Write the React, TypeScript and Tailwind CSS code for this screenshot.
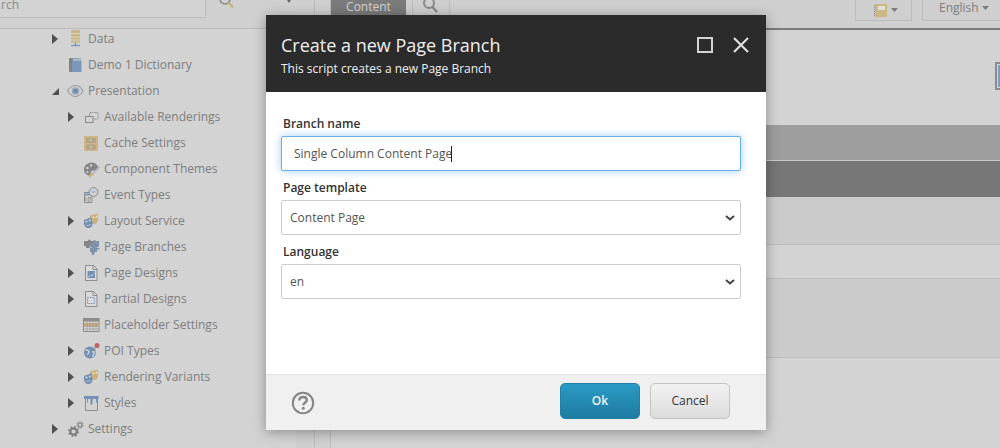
import React from 'react';

type TreeRow = {
    label: string;
    level: 1 | 2;
    arrow?: 'right' | 'down';
    icon: React.ReactNode;
};

const Svg = ({ children }: { children: React.ReactNode }) => (
    <svg width="16" height="16" viewBox="0 0 16 16" className="shrink-0 overflow-visible">
        {children}
    </svg>
);

const DataIcon = () => (
    <Svg>
        <rect x="3" y="-1" width="9" height="12.500" fill="#c9b588" />
        <path d="M3 2.500h9M3 6h9M3 9h9" stroke="#e0d6bd" strokeWidth="1" />
        <path d="M7.500 11.500v3M3 14.500h9" stroke="#7c98b8" strokeWidth="1.400" />
    </Svg>
);

const BookIcon = () => (
    <Svg>
        <rect x="1" y="1" width="4" height="14" rx="1" fill="#838383" />
        <path d="M4 3.500h9.500V15H4z" fill="#7b98ba" />
        <path d="M5 1.800h8" stroke="#7b98ba" strokeWidth="1.200" />
    </Svg>
);

const EyeIcon = () => (
    <Svg>
        <path d="M-0.500 8C2 4 5 2.500 7.500 2.500S13 4 15 8C13 11.500 10 13.500 7.500 13.500S2 11.500-0.500 8z" fill="none" stroke="#9a9fa6" strokeWidth="1.200" />
        <circle cx="7.500" cy="8" r="3.800" fill="#9aa5b3" />
        <circle cx="7.500" cy="8" r="2" fill="#6c86a6" />
    </Svg>
);

const RenderingsIcon = () => (
    <Svg>
        <rect x="1.500" y="7.500" width="7.500" height="6" fill="none" stroke="#8a8a8a" />
        <path d="M5.500 7V3.500h8.500v6.500h-4" fill="none" stroke="#9a9a9a" strokeDasharray="3 1" />
    </Svg>
);

const CacheIcon = () => (
    <Svg>
        <rect x="0" y="1" width="14" height="15" fill="#cdb686" />
        <rect x="2" y="3" width="10" height="5" fill="#b5a68a" />
        <rect x="2" y="9.500" width="10" height="5" fill="#b5a68a" />
        <path d="M6 5h2M6 12h2" stroke="#e3dbc6" />
    </Svg>
);

const PaletteIcon = () => (
    <Svg>
        <path d="M8 1.500C3.500 1.500 0 4.500 0 8.500c0 3.500 3 6 5.500 6 1.500 0 1.500-1.500 1.200-2.500S7.500 9.500 9 9.500h3c1.500 0 2.500-1 2-3C13.500 3.500 11.500 1.500 8 1.500z" fill="#858585" />
        <circle cx="3.500" cy="7" r="1.200" fill="#d3d3d3" />
        <circle cx="7" cy="4.500" r="1.200" fill="#d3d3d3" />
        <circle cx="3.500" cy="11" r="1.100" fill="#d3d3d3" />
        <path d="M15.500 5.500L8.500 13" stroke="#b4b4b4" strokeWidth="1.800" />
        <path d="M5 15.500l4-2.500" stroke="#c9b27e" strokeWidth="2.200" />
    </Svg>
);

const EventIcon = () => (
    <Svg>
        <path d="M.500 5.500h7.500v10H.500z" fill="#d3d3d3" stroke="#8a8a8a" />
        <path d="M.500 7.500h7.500" stroke="#7c98b8" strokeWidth="2" />
        <path d="M2 10v4M4 10.500h2.500v1.500H4V14h2.500" fill="none" stroke="#8a8a8a" strokeWidth="0.800" />
        <circle cx="9.500" cy="5" r="4.400" fill="#d3d3d3" stroke="#8a8a8a" />
        <path d="M7.500 4l2 2 1.500-2.500" fill="none" stroke="#7c98b8" />
    </Svg>
);

const MasksIcon = () => (
    <Svg>
        <path d="M6 2.500l8-2v6c0 3-2 4.500-4 4.500S6 8.500 6 6z" fill="#c9b27e" />
        <path d="M0 7l7-2.500 1.500 5c.5 3-1.500 5.500-4 5.500S0 13 0 10z" fill="#6f8fb4" />
        <circle cx="2.500" cy="8.500" r="1.100" fill="#d3d3d3" />
        <circle cx="5.800" cy="7.500" r="1.100" fill="#d3d3d3" />
        <path d="M2.500 12c1 1 3 .500 4-1" fill="none" stroke="#d3d3d3" />
        <circle cx="9.500" cy="4.500" r="1" fill="#eadfc5" />
        <circle cx="12.500" cy="3.500" r="1" fill="#eadfc5" />
    </Svg>
);

const BranchesIcon = () => (
    <Svg>
        <path d="M0 2h4a1.500 1.500 0 0 1 3 0h2v4H7a1.500 1.500 0 0 0 0 3H2V7H0z" fill="#858585" />
        <path d="M6 5h3V2.500a1.500 1.500 0 0 1 3 0V2h3v6h-2v1h2.500v1.500H13v2.500H10.500v1.500a1.500 1.500 0 0 1-3 0V13H6V9h1.500V8H6z" fill="#7f93aa" />
    </Svg>
);

const DocFrame = ({ children }: { children: React.ReactNode }) => (
    <Svg>
        <path d="M1.500 .500h8l3.500 3.500v11.500H1.500z" fill="#dadada" stroke="#8c8c8c" />
        <path d="M9 .500v4h4" fill="none" stroke="#8c8c8c" />
        {children}
    </Svg>
);

const PlaceholderIcon = () => (
    <Svg>
        <rect x="-0.500" y="1.500" width="15.500" height="13" fill="#d8d8d8" stroke="#8c8c8c" />
        <rect x="0" y="2" width="15" height="2.500" fill="#8c8c8c" />
        <rect x="0" y="6" width="15" height="3" fill="#c9a878" />
        <path d="M0 9.500h15M0 12h15M3 4v10M6 4v10M9 4v10M12 4v10" stroke="#a0a0a0" strokeWidth="0.800" />
    </Svg>
);

const PoiIcon = () => (
    <Svg>
        <circle cx="6" cy="9.500" r="6" fill="#7391b4" />
        <path d="M1.500 7c2 0 3.500 .500 3.500 2s-1.500 1.500-1.500 3M8 8.500l2.500 .500L8.500 14" fill="none" stroke="#d3d3d3" strokeWidth="1.400" />
        <path d="M8 8.500L13 3" stroke="#8a8a8a" strokeWidth="1" />
        <circle cx="13" cy="2.500" r="2.500" fill="#bb6262" />
    </Svg>
);

const StylesIcon = () => (
    <Svg>
        <path d="M1.500 2.500h12v13h-12z" fill="none" stroke="#8c8c8c" />
        <path d="M0 1h14.500v3h-1.500v3.500h-1V4H8.500v5.500h-2V4H4v3.500H3V4H0z" fill="#7391b4" />
    </Svg>
);

const GearsIcon = () => (
    <Svg>
        <circle cx="5.500" cy="10.500" r="3.200" fill="none" stroke="#7f7f7f" strokeWidth="2.200" />
        <circle cx="5.500" cy="10.500" r="4.700" fill="none" stroke="#7f7f7f" strokeWidth="1.600" strokeDasharray="1.800 1.900" />
        <circle cx="12" cy="4" r="1.900" fill="none" stroke="#8f8f8f" strokeWidth="1.500" />
        <circle cx="12" cy="4" r="3.100" fill="none" stroke="#8f8f8f" strokeWidth="1.200" strokeDasharray="1.400 1.300" />
    </Svg>
);

const rows: TreeRow[] = [
    { label: 'Data', level: 1, arrow: 'right', icon: <DataIcon /> },
    { label: 'Demo 1 Dictionary', level: 1, icon: <BookIcon /> },
    { label: 'Presentation', level: 1, arrow: 'down', icon: <EyeIcon /> },
    { label: 'Available Renderings', level: 2, arrow: 'right', icon: <RenderingsIcon /> },
    { label: 'Cache Settings', level: 2, icon: <CacheIcon /> },
    { label: 'Component Themes', level: 2, icon: <PaletteIcon /> },
    { label: 'Event Types', level: 2, icon: <EventIcon /> },
    { label: 'Layout Service', level: 2, arrow: 'right', icon: <MasksIcon /> },
    { label: 'Page Branches', level: 2, icon: <BranchesIcon /> },
    {
        label: 'Page Designs',
        level: 2,
        arrow: 'right',
        icon: (
            <DocFrame>
                <rect x="3.500" y="6" width="7.500" height="7" fill="#7391b4" />
                <path d="M4 12l2.500-2 1.500 1 2.500-3" fill="none" stroke="#d3d3d3" strokeWidth="0.800" />
            </DocFrame>
        ),
    },
    {
        label: 'Partial Designs',
        level: 2,
        arrow: 'right',
        icon: (
            <DocFrame>
                <rect x="3.500" y="6.500" width="7" height="6" fill="none" stroke="#7391b4" strokeDasharray="1.500 1" />
            </DocFrame>
        ),
    },
    { label: 'Placeholder Settings', level: 2, icon: <PlaceholderIcon /> },
    { label: 'POI Types', level: 2, arrow: 'right', icon: <PoiIcon /> },
    { label: 'Rendering Variants', level: 2, arrow: 'right', icon: <MasksIcon /> },
    { label: 'Styles', level: 2, arrow: 'right', icon: <StylesIcon /> },
    { label: 'Settings', level: 1, arrow: 'right', icon: <GearsIcon /> },
];

const Arrow = ({ kind }: { kind?: 'right' | 'down' }) => (
    <span className="w-[16px] shrink-0 flex items-center">
        {kind === 'right' && (
            <svg width="6" height="10" viewBox="0 0 6 10">
                <path d="M0 0l6 5-6 5z" fill="#505050" />
            </svg>
        )}
        {kind === 'down' && (
            <svg width="7" height="7" viewBox="0 0 7 7">
                <path d="M7 0v7H0z" fill="#505050" />
            </svg>
        )}
    </span>
);

const Tree = () => (
    <div className="-mt-[3px]">
        {rows.map(row => (
            <div
                key={row.label}
                className={`h-[26px] flex items-center ${row.level === 1 ? 'pl-[52px]' : 'pl-[68px]'}`}
            >
                <Arrow kind={row.arrow} />
                {row.icon}
                <span className="ml-[4px] text-[12px] text-[#7e7e7e] whitespace-nowrap">{row.label}</span>
            </div>
        ))}
    </div>
);

const Field = ({ label, children }: { label: string; children: React.ReactNode }) => (
    <div className="flex flex-col">
        <label className="ml-[2px] mb-[3px] h-[18px] leading-[18px] text-[12px] font-semibold text-[#333]">{label}</label>
        {children}
    </div>
);

const Select = ({ value }: { value: string }) => (
    <div className="h-[35px] flex items-center justify-between pl-[8px] pr-[5px] bg-white border border-[#ccc] rounded-[2px] text-[12px] text-[#555]">
        <span>{value}</span>
        <svg width="10" height="6" viewBox="0 0 10 6">
            <path d="M1 1l4 3.500L9 1" fill="none" stroke="#444" strokeWidth="2" />
        </svg>
    </div>
);

const Dialog = () => (
    <div className="absolute left-[266px] top-[15px] w-[500px] h-[415px] flex flex-col shadow-[0_2px_12px_rgba(0,0,0,0.35)] font-['Open_Sans',sans-serif]">
        <div className="h-[77px] shrink-0 bg-[#2b2b2b] flex items-start justify-between pl-[15px] pr-[17px]">
            <div className="pt-[18px]">
                <div className="text-[18px] leading-[25px] text-[#f0f0f0]">Create a new Page Branch</div>
                <div className="text-[12px] leading-[16px] text-[#f0f0f0] mt-[3px]">This script creates a new Page Branch</div>
            </div>
            <div className="flex items-center gap-[20px] pt-[22px]">
                <div className="w-[16px] h-[16px] border-2 border-[#d3d3d3]" />
                <svg width="16" height="16" viewBox="0 0 16 16">
                    <path d="M1 1l14 14M15 1L1 15" stroke="#e4e4e4" strokeWidth="2" />
                </svg>
            </div>
        </div>
        <div className="flex-1 bg-white pt-[23px] pl-[15px] pr-[25px] flex flex-col gap-[8px]">
            <Field label="Branch name">
                <div className="h-[35px] flex items-center pl-[12px] bg-white border border-[#66afe9] rounded-[2px] shadow-[0_0_8px_rgba(102,175,233,0.6)] text-[12px] text-[#555]">
                    Single Column Content Page
                    <span className="inline-block w-px h-[16px] -ml-[1px] bg-[#222]" />
                </div>
            </Field>
            <Field label="Page template">
                <Select value="Content Page" />
            </Field>
            <Field label="Language">
                <Select value="en" />
            </Field>
        </div>
        <div className="h-[56px] shrink-0 bg-[#f0f0f0] border-t border-[#e3e3e3] flex items-center justify-between pl-[25px] pr-[36px]">
            <svg width="24" height="24" viewBox="0 0 24 24">
                <circle cx="12" cy="12" r="10.200" fill="none" stroke="#858585" strokeWidth="2" />
                <path d="M8.300 9.500c0-2.300 1.600-3.500 3.800-3.500s3.700 1.200 3.700 3.100c0 2.700-3.500 2.600-3.500 5.100" fill="none" stroke="#858585" strokeWidth="2.400" />
                <circle cx="12.300" cy="17.300" r="1.500" fill="#858585" />
            </svg>
            <div className="flex gap-[10px] mb-[3px]">
                <button className="w-[80px] h-[36px] rounded-[5px] border border-[#2180a8] bg-gradient-to-b from-[#2a9bc6] to-[#1f7ba1] text-[12px] font-semibold text-[#f4f4f4]">
                    Ok
                </button>
                <button className="w-[80px] h-[36px] rounded-[5px] border border-[#c4c4c4] bg-gradient-to-b from-[#f2f2f2] to-[#dcdcdc] text-[12px] text-[#333]">
                    Cancel
                </button>
            </div>
        </div>
    </div>
);

const App: React.FC = () => {
    return (
        <div className="relative w-[1000px] h-[448px] overflow-hidden bg-[#d3d3d3] font-['Open_Sans',sans-serif]">
            <div className="flex h-full">
                {/* Left tree panel */}
                <div className="w-[296px] shrink-0">
                    <div className="h-[29px] border-b border-[#bdbdbd] bg-[#d0d0d0] flex items-start">
                        <div className="w-[206px] h-[18px] shrink-0 border-r border-b border-[#bcbcbc] rounded-br-[2px] bg-[#d3d3d3] text-[12px] leading-[10px] text-[#8a8a8a] pl-[1px]">
                            rch
                        </div>
                        <svg width="16" height="10" viewBox="0 0 16 10" className="ml-[13px] shrink-0">
                            <circle cx="6" cy="-1" r="5" fill="none" stroke="#8a8a8a" strokeWidth="1.500" />
                            <path d="M9.500 2.500L14 7.500" stroke="#c9b27e" strokeWidth="2.500" />
                        </svg>
                        <svg width="8" height="4" viewBox="0 0 8 4" className="ml-[50px] shrink-0">
                            <path d="M2 0h4L4 3z" fill="#666" />
                        </svg>
                    </div>
                    <Tree />
                </div>

                {/* Splitter */}
                <div className="w-[19px] shrink-0 bg-[#cfcfcf] border-r border-[#bdbdbd]" />
                <div className="w-[16px] shrink-0 border-r border-[#bdbdbd] bg-[#d0d0d0]" />

                {/* Content panel */}
                <div className="flex-1 min-w-0 flex flex-col">
                    <div className="h-[30px] shrink-0 bg-[#cfcfcf] border-b-2 border-[#7b7b7b] flex items-start">
                        <div className="w-[75px] h-[16px] bg-[#7b7b7b] text-[12px] leading-[14px] text-[#d3d3d3] text-center">Content</div>
                        <div className="ml-[6px] w-[38px] h-[16px] border-x border-[#bcbcbc] flex justify-center">
                            <svg width="16" height="14" viewBox="0 0 16 14">
                                <circle cx="6" cy="3" r="5" fill="none" stroke="#8a8a8a" strokeWidth="2" />
                                <path d="M9.500 7L14 12" stroke="#8a8a8a" strokeWidth="2.500" />
                            </svg>
                        </div>
                        <div className="ml-auto w-[57px] h-[21px] border border-t-0 border-[#bcbcbc] flex items-center justify-center gap-[4px] pl-[5px]">
                            <svg width="13" height="13" viewBox="0 0 13 13">
                                <rect x="1" y="0" width="12" height="13" fill="#cdb686" />
                                <rect x="4" y="2" width="7" height="4" fill="#e3e0d8" />
                                <path d="M.500 1v11" stroke="#8a8a8a" strokeDasharray="1 1" />
                            </svg>
                            <svg width="7" height="4" viewBox="0 0 7 4">
                                <path d="M0 0h7L3.500 4z" fill="#7b7b7b" />
                            </svg>
                        </div>
                        <div className="ml-[10px] w-[78px] h-[21px] border border-t-0 border-r-0 border-[#bcbcbc] pl-[16px] flex items-start gap-[3px] text-[12px] leading-[16px] text-[#7e7e7e]">
                            English
                            <svg width="7" height="4" viewBox="0 0 7 4" className="mt-[6px]">
                                <path d="M0 0h7L3.500 4z" fill="#7b7b7b" />
                            </svg>
                        </div>
                    </div>
                    <div className="h-[95px] shrink-0 flex justify-end pt-[32px]">
                        <div className="w-[5px] h-[28px] border-2 border-r-0 border-[#8a8a8a] bg-[#d8d8d8] pl-px py-px">
                            <div className="h-full bg-[#7c9cc0]" />
                        </div>
                    </div>
                    <div className="h-[35px] shrink-0 bg-[#9e9e9e]" />
                    <div className="h-px shrink-0 bg-[#c9c9c9]" />
                    <div className="h-[36px] shrink-0 bg-[#777777]" />
                    <div className="h-[48px] shrink-0 bg-[#cbcbcb] border-b border-[#bdbdbd]" />
                    <div className="h-[34px] shrink-0 border-b border-[#bdbdbd]" />
                    <div className="h-[79px] shrink-0 bg-[#cbcbcb] border-b border-[#bdbdbd]" />
                </div>
            </div>

            <Dialog />
        </div>
    );
};

export default App;
